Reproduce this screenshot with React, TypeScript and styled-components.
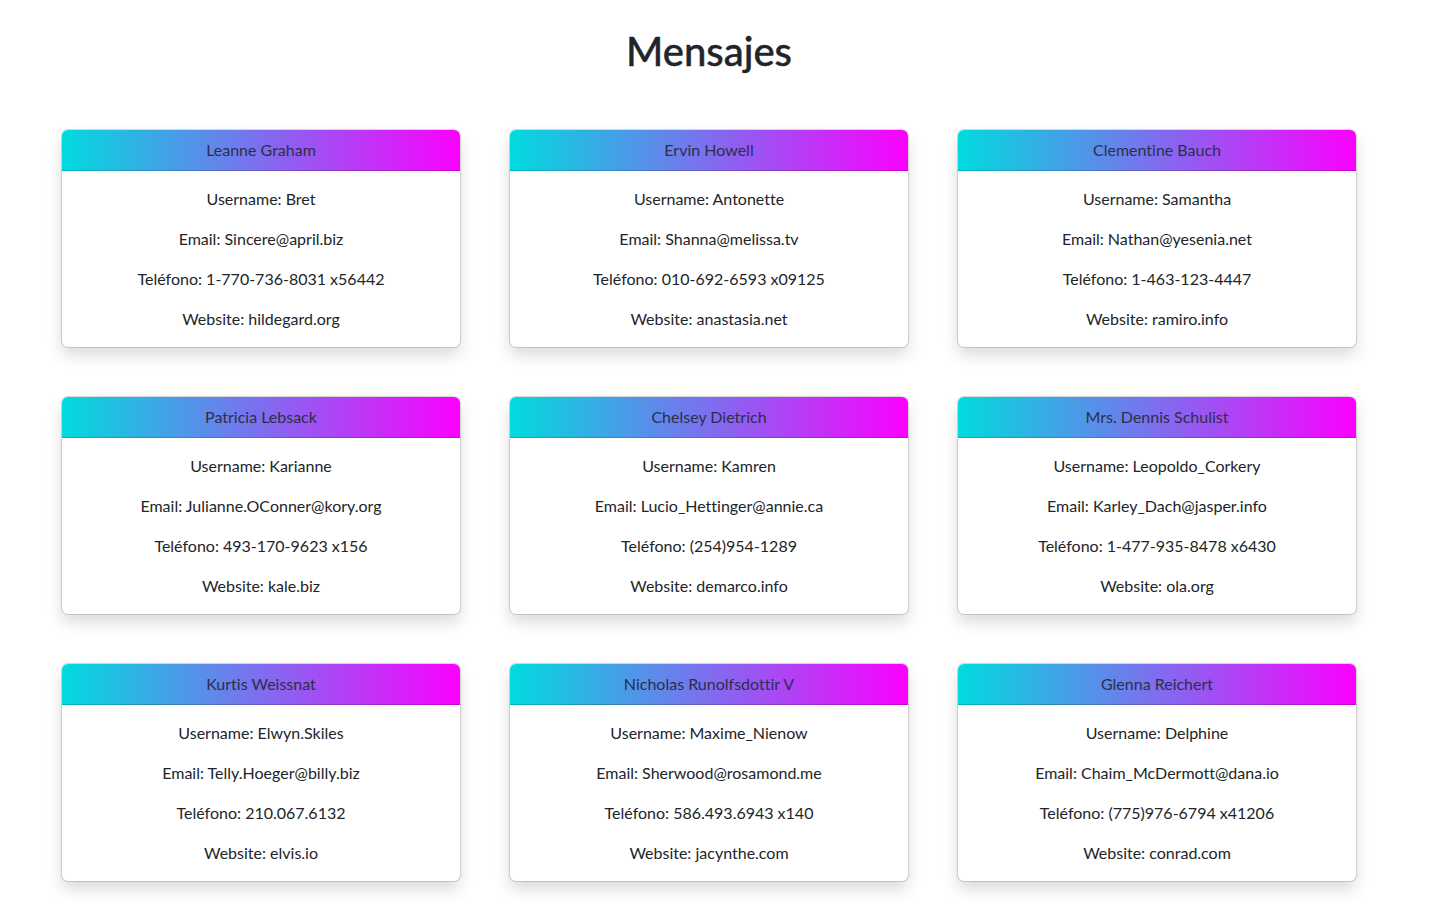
import React from "react";
import styled, { createGlobalStyle } from "styled-components";

const GlobalStyle = createGlobalStyle`
  html, body { margin: 0; padding: 0; background: #fff; }
  body {
    font-family: "Segoe UI", Lato, "Noto Sans", sans-serif;
    font-variant-ligatures: none;
    color: #212529;
    font-size: 16px;
    line-height: 1.5;
  }
`;

const Page = styled.div`
  width: 1418px;
  padding: 27px 0 40px;
  box-sizing: border-box;
`;

const Title = styled.h1`
  margin: 0 0 55px;
  text-align: center;
  font-size: 40px;
  font-weight: 500;
  line-height: 48px;
  color: #212529;
  -webkit-text-stroke: 0.4px #212529;
`;

const Grid = styled.div`
  display: grid;
  grid-template-columns: repeat(3, 398px);
  column-gap: 50px;
  row-gap: 50px;
  padding: 0 62px;
`;

const Card = styled.div`
  display: flex;
  flex-direction: column;
  background: #fff;
  border-radius: 6px;
  overflow: hidden;
  box-shadow: 0 0 0 1px rgba(0, 0, 0, 0.14), 0 8px 16px rgba(0, 0, 0, 0.15);
`;

const CardHeader = styled.div`
  padding: 8px 16px;
  text-align: center;
  line-height: 24px;
  color: #2b2f4a;
  background: linear-gradient(90deg, #00dbde 0%, #fc00ff 100%);
  border-bottom: 1px solid rgba(0, 0, 0, 0.175);
`;

const CardBody = styled.div`
  padding: 16px 16px 0;
  text-align: center;
`;

const Field = styled.p`
  margin: 0 0 16px;
  line-height: 24px;
`;

type User = {
  name: string;
  username: string;
  email: string;
  phone: string;
  website: string;
};

const users: User[] = [
  { name: "Leanne Graham", username: "Bret", email: "Sincere@april.biz", phone: "1-770-736-8031 x56442", website: "hildegard.org" },
  { name: "Ervin Howell", username: "Antonette", email: "Shanna@melissa.tv", phone: "010-692-6593 x09125", website: "anastasia.net" },
  { name: "Clementine Bauch", username: "Samantha", email: "Nathan@yesenia.net", phone: "1-463-123-4447", website: "ramiro.info" },
  { name: "Patricia Lebsack", username: "Karianne", email: "Julianne.OConner@kory.org", phone: "493-170-9623 x156", website: "kale.biz" },
  { name: "Chelsey Dietrich", username: "Kamren", email: "Lucio_Hettinger@annie.ca", phone: "(254)954-1289", website: "demarco.info" },
  { name: "Mrs. Dennis Schulist", username: "Leopoldo_Corkery", email: "Karley_Dach@jasper.info", phone: "1-477-935-8478 x6430", website: "ola.org" },
  { name: "Kurtis Weissnat", username: "Elwyn.Skiles", email: "Telly.Hoeger@billy.biz", phone: "210.067.6132", website: "elvis.io" },
  { name: "Nicholas Runolfsdottir V", username: "Maxime_Nienow", email: "Sherwood@rosamond.me", phone: "586.493.6943 x140", website: "jacynthe.com" },
  { name: "Glenna Reichert", username: "Delphine", email: "Chaim_McDermott@dana.io", phone: "(775)976-6794 x41206", website: "conrad.com" },
];

export default function App() {
  return (
    <>
      <GlobalStyle />
      <Page>
        <Title>Mensajes</Title>
        <Grid>
          {users.map((u) => (
            <Card key={u.username}>
              <CardHeader>{u.name}</CardHeader>
              <CardBody>
                <Field>Username: {u.username}</Field>
                <Field>Email: {u.email}</Field>
                <Field>Teléfono: {u.phone}</Field>
                <Field>Website: {u.website}</Field>
              </CardBody>
            </Card>
          ))}
        </Grid>
      </Page>
    </>
  );
}
